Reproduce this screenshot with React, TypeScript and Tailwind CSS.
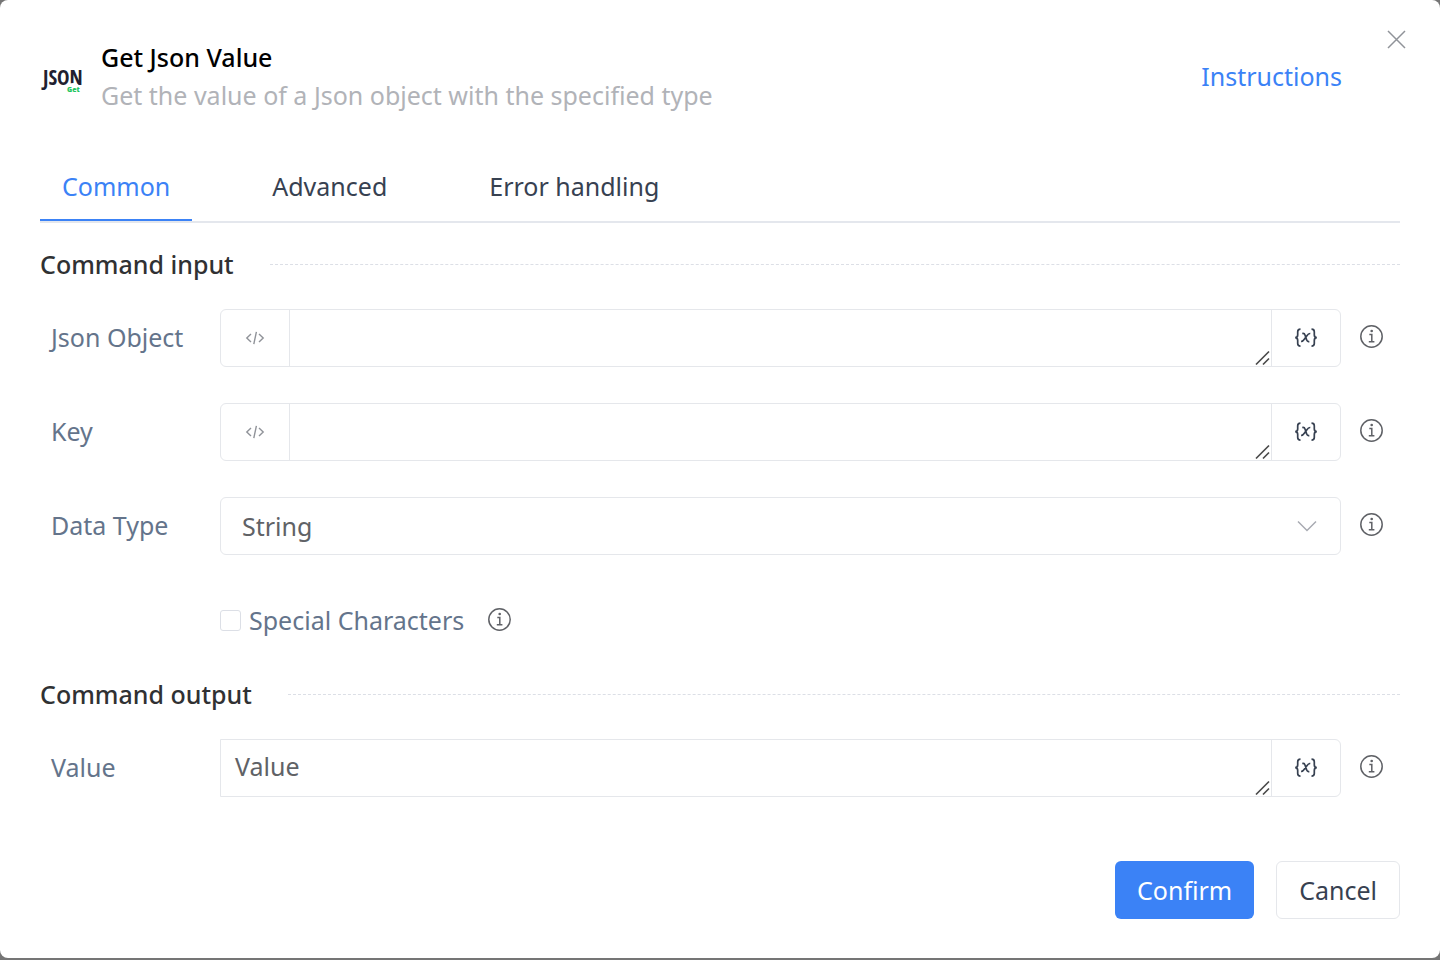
import { useState } from "react";
import type { ReactNode } from "react";
import clsx from "clsx";

const TABS = ["Common", "Advanced", "Error handling"];

function JsonLogo() {
  return (
    <svg width="42" height="42" viewBox="0 0 42 42" className="shrink-0 overflow-visible" aria-hidden="true">
      <text
        x="3"
        y="30"
        fill="#211f30"
        fontSize="21"
        fontWeight="700"
        fontFamily="'Open Sans Condensed', 'Liberation Sans Narrow', sans-serif"
      >
        JSON
      </text>
      <ellipse cx="33" cy="36" rx="9" ry="8" fill="#fff" />
      <text x="27" y="37" fill="#22c55e" fontSize="7" fontWeight="800" fontFamily="'Open Sans', sans-serif">
        Get
      </text>
    </svg>
  );
}

function InfoButton({ label }: { label: string }) {
  return (
    <button type="button" aria-label={`About ${label}`} className="shrink-0 text-[#5f6166]">
      <svg width="24" height="24" viewBox="0 0 24 24" fill="none" stroke="currentColor" strokeWidth="1.5">
        <circle cx="11.5" cy="11.5" r="10.7" />
        <path d="M9.3 9.4h2.500v7.200M8.800 16.800h5.600" />
        <circle cx="11.7" cy="6" r="1.3" fill="currentColor" stroke="none" />
      </svg>
    </button>
  );
}

function FormRow({ id, label, children }: { id: string; label: string; children: ReactNode }) {
  return (
    <div className="flex items-center">
      <label htmlFor={id} className="w-45 shrink-0 pb-0.5 pl-[11px] text-[#64748b]">
        {label}
      </label>
      {children}
      <div className="flex w-[59px] shrink-0 pb-0.5 pl-[19px]">
        <InfoButton label={label} />
      </div>
    </div>
  );
}

function SectionTitle({ children }: { children: ReactNode }) {
  return (
    <div className="flex items-center gap-9">
      <h2 className="font-medium text-[#303133]">{children}</h2>
      <div className="flex-1 border-t border-dashed border-[#dcdfe6]" />
    </div>
  );
}

function ExpressionField({
  id,
  defaultValue,
  hasCode = true,
}: {
  id: string;
  defaultValue?: string;
  hasCode?: boolean;
}) {
  return (
    <div
      className={clsx(
        "flex h-[58px] min-w-0 flex-1 border border-[#e5e7eb]",
        hasCode ? "rounded-md" : "rounded-r-md"
      )}
    >
      {hasCode && (
        <button
          type="button"
          aria-label="Edit as code"
          className="flex w-[69px] shrink-0 items-center justify-center border-r border-[#e5e7eb] text-[#909399]"
        >
          <svg width="20" height="16" viewBox="0 0 20 16" fill="none" stroke="currentColor" strokeWidth="1.4">
            <path d="M6 4L1.8 8L6 12M14 4l4.2 4L14 12M11.4 1.8L8.8 14.2" />
          </svg>
        </button>
      )}
      <div className="relative flex min-w-0 flex-1">
        <textarea
          id={id}
          rows={1}
          defaultValue={defaultValue}
          className="w-full resize-none overflow-hidden px-3.5 py-[7px] text-[#606266] outline-none"
        />
        <svg
          width="16"
          height="16"
          viewBox="0 0 16 16"
          fill="none"
          stroke="#4b4b4b"
          strokeWidth="1.7"
          className="pointer-events-none absolute right-0 bottom-0"
          aria-hidden="true"
        >
          <path d="M1 14.5L14 1.5M8 14.5L14 8.5" />
        </svg>
      </div>
      <button
        type="button"
        aria-label="Insert variable"
        className="flex w-[69px] shrink-0 items-center justify-center border-l border-[#e5e7eb] text-[#374151]"
      >
        <svg width="26" height="20" viewBox="0 0 26 20" fill="none" stroke="currentColor" strokeWidth="1.7">
          <path d="M7.5 1.2C5.3 1.2 4.7 2 4.7 3.8v3.2c0 1.8-.7 2.6-2.5 2.7 1.8.1 2.5.9 2.5 2.700v3.200c0 1.800.6 2.600 2.800 2.600" />
          <path d="M18.500 1.200c2.200 0 2.800.8 2.800 2.600v3.200c0 1.800.7 2.600 2.500 2.700-1.800.1-2.500.9-2.500 2.700v3.200c0 1.800-.6 2.600-2.800 2.600" />
          <path d="M9.300 5.600c1.700-.5 2.300.2 2.800 1.700l1.600 4.700c.5 1.400 1.100 1.900 2.600 1.400M17.300 5.500c-1.500-.2-2.300.5-3.600 2.400l-2.200 3.200c-1.200 1.800-1.900 2.500-3.400 2.300" />
        </svg>
      </button>
    </div>
  );
}

export default function App() {
  const [activeTab, setActiveTab] = useState("Common");

  return (
    <div className="flex min-h-screen flex-col bg-[#757575] pb-0.5 font-['Noto_Sans',sans-serif] text-[25px] leading-[38px]">
      <div role="dialog" aria-label="Get Json Value" className="relative flex-1 rounded-lg bg-white px-10 pt-[38px] pb-[39px]">
        <button type="button" aria-label="Close" className="absolute top-[29px] right-[33px] text-[#909399]">
          <svg width="21" height="21" viewBox="0 0 21 21" fill="none" stroke="currentColor" strokeWidth="1.5">
            <path d="M2 2l17 17M19 2L2 19" />
          </svg>
        </button>

        <header className="flex items-center">
          <JsonLogo />
          <div className="ml-[19px] min-w-0 flex-1">
            <h1 className="font-medium text-black">Get Json Value</h1>
            <p className="text-[#b1b3b8]">Get the value of a Json object with the specified type</p>
          </div>
          <a href="#instructions" className="mr-[58px] text-[#3b82f6]">
            Instructions
          </a>
        </header>

        <div role="tablist" className="mt-10 flex gap-[58px] border-b-2 border-[#e4e7ed]">
          {TABS.map((tab) => (
            <button
              key={tab}
              type="button"
              role="tab"
              aria-selected={tab === activeTab}
              onClick={() => setActiveTab(tab)}
              className={clsx(
                "border-b-2 px-[22px] pt-[13px] pb-3.5",
                tab === activeTab ? "border-[#3b82f6] text-[#3b82f6]" : "border-transparent text-[#374151]"
              )}
            >
              {tab}
            </button>
          ))}
        </div>

        <form onSubmit={(e) => e.preventDefault()}>
          <section className="mt-[22px]">
            <SectionTitle>Command input</SectionTitle>
            <div className="mt-[26px] flex flex-col gap-9">
              <FormRow id="json-object" label="Json Object">
                <ExpressionField id="json-object" />
              </FormRow>
              <FormRow id="key" label="Key">
                <ExpressionField id="key" />
              </FormRow>
              <FormRow id="data-type" label="Data Type">
                <div className="relative flex min-w-0 flex-1 items-center">
                  <select
                    id="data-type"
                    className="h-[58px] w-full appearance-none rounded-md border border-[#e5e7eb] bg-white px-[21px] text-[#606266] outline-none"
                  >
                    <option>String</option>
                    <option>Number</option>
                    <option>Boolean</option>
                  </select>
                  <svg
                    width="20"
                    height="12"
                    viewBox="0 0 20 12"
                    fill="none"
                    stroke="#a8abb2"
                    strokeWidth="1.5"
                    className="pointer-events-none absolute right-6"
                    aria-hidden="true"
                  >
                    <path d="M1 1.5l9 9l9-9" />
                  </svg>
                </div>
              </FormRow>
              <div className="flex h-[58px] items-center gap-6 pl-45">
                <label className="flex items-center gap-2 text-[#64748b]">
                  <input
                    type="checkbox"
                    className="size-[21px] appearance-none rounded-[3px] border border-[#dcdfe6] bg-white checked:border-[#3b82f6] checked:bg-[#3b82f6]"
                  />
                  Special Characters
                </label>
                <InfoButton label="Special Characters" />
              </div>
            </div>
          </section>

          <section className="mt-[26px]">
            <SectionTitle>Command output</SectionTitle>
            <div className="mt-[26px]">
              <FormRow id="value" label="Value">
                <ExpressionField id="value" defaultValue="Value" hasCode={false} />
              </FormRow>
            </div>
          </section>

          <footer className="mt-16 flex justify-end gap-[22px]">
            <button type="submit" className="h-[58px] rounded-md bg-[#3b82f6] px-[22px] text-white">
              Confirm
            </button>
            <button type="button" className="h-[58px] rounded-md border border-[#e5e7eb] px-[22px] text-[#374151]">
              Cancel
            </button>
          </footer>
        </form>
      </div>
    </div>
  );
}
